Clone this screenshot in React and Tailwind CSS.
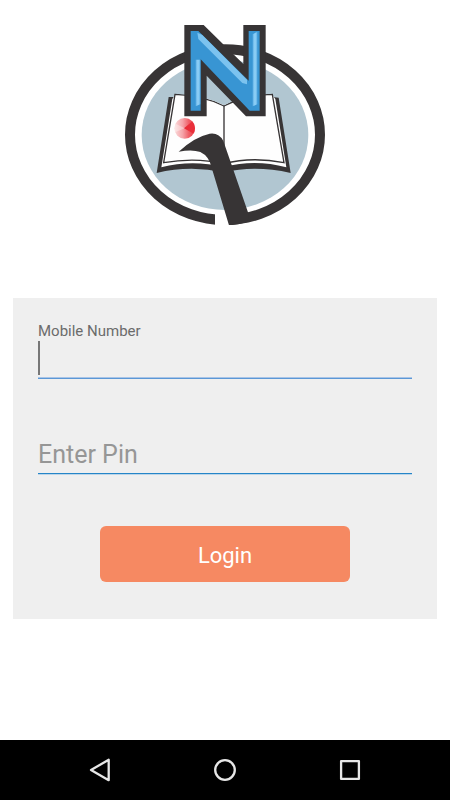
function Logo() {
  return (
    <svg viewBox="30 30 600 600" className="size-[200px]" role="img" aria-label="Logo">
      <defs>
        <linearGradient id="dot" x1="0" y1="0" x2="1" y2="0">
          <stop offset="0" stopColor="#fbdcdc" />
          <stop offset="0.4" stopColor="#f5a3a8" />
          <stop offset="0.7" stopColor="#ef6068" />
          <stop offset="1" stopColor="#ea3a45" />
        </linearGradient>
        <linearGradient id="dotCore" x1="0" y1="0" x2="1" y2="0">
          <stop offset="0" stopColor="#e8242f" />
          <stop offset="1" stopColor="#e8242f" stopOpacity="0.6" />
        </linearGradient>
        <linearGradient id="shine" x1="0" y1="0" x2="1" y2="0">
          <stop offset="0" stopColor="#5fb0e6" />
          <stop offset="0.5" stopColor="#94d3f8" />
          <stop offset="1" stopColor="#5fb0e6" />
        </linearGradient>
      </defs>

      {/* ring */}
      <ellipse cx="330" cy="359" rx="285" ry="256" fill="#fff" stroke="#373435" strokeWidth="30" />
      <ellipse cx="330" cy="360" rx="250" ry="225" fill="#b1c6d1" />
      <path d="M300 592 H345 V631 H300 Z" fill="#fff" />

      {/* book */}
      <path d="M161 246 L180 246 L472 246 L491 248 L527 474 Q420 450 327 472 Q225 450 125 474 Z" fill="#373435" />
      <path d="M172 252 L180 240 L472 240 L481 252 L514 457 Q420 431 327 456 Q230 433 139 457 Z" fill="#fff" />
      <path
        d="M180 238 Q262 240 327 273 Q390 240 472 238 L507 443 Q410 424 327 446 Q240 426 146 443 Z"
        fill="#fefefe"
        stroke="#373435"
        strokeWidth="4"
      />
      <path d="M327 273 V446" stroke="#373435" strokeWidth="4" />
      <path d="M184 236 Q262 238 327 271 Q390 238 470 236 L440 160 H230 Z" fill="#b1c6d1" />
      <circle cx="209" cy="340" r="31" fill="url(#dot)" />
      <path d="M207 340 L232 319 A31 31 0 0 1 236 356 Z" fill="url(#dotCore)" />
      <path d="M209 340 L182 326 A31 31 0 0 0 180 352 Z" fill="#fff" opacity="0.35" />

      {/* pen stroke */}
      <path
        d="M191 410 Q238 366 284 356 Q312 352 325 378 L350 450 L401 598 L398 621 L370 628 L342 631 L290 458 Q283 424 256 411 Q232 402 191 410 Z"
        fill="#373435"
      />

      {/* letter mark */}
      <path
        d="M208 30 H266 L385 147 V30 H452 V304 H393 L275 182 V304 H208 Z"
        fill="#373435"
      />
      <path d="M227 48 H250 L401 197 V48 H434 V287 H404 L257 133 V287 H227 Z" fill="#3895d3" />
      <path d="M242 134 H256 V268 L242 274 Z" fill="url(#shine)" />
      <path d="M413 58 L427 50 V268 L413 274 Z" fill="url(#shine)" />
      <path d="M247 53 L262 60 L396 194 V208 L382 204 L250 72 Z" fill="#7cc3ef" />
    </svg>
  );
}

function NavBar() {
  return (
    <nav className="bg-black">
      <div className="mx-auto grid h-[60px] max-w-[375px] grid-cols-3 text-[#e6e6e6]">
        <button type="button" aria-label="Back" className="flex items-center justify-center">
          <svg viewBox="0 0 24 24" className="size-6" fill="none" stroke="currentColor" strokeWidth="2.3" strokeLinejoin="round">
            <path d="M20.7 1.8 V22.2 L3 12 Z" />
          </svg>
        </button>
        <button type="button" aria-label="Home" className="flex items-center justify-center">
          <svg viewBox="0 0 24 24" className="size-6" fill="none" stroke="currentColor" strokeWidth="2.3">
            <circle cx="12" cy="12" r="9.8" />
          </svg>
        </button>
        <button type="button" aria-label="Recent apps" className="flex items-center justify-center">
          <svg viewBox="0 0 24 24" className="size-6" fill="none" stroke="currentColor" strokeWidth="2.3" strokeLinejoin="round">
            <path d="M3.1 3.1 H20.9 V20.9 H3.1 Z" />
          </svg>
        </button>
      </div>
    </nav>
  );
}

export default function App() {
  return (
    <div className="flex min-h-screen flex-col bg-white font-['Roboto',sans-serif]">
      <main className="flex-1">
        <div className="flex justify-center pt-[25px]">
          <Logo />
        </div>

        <form
          className="mx-[13px] mt-[73px] flex flex-col bg-[#efefef] px-[25px] pt-6 pb-[37px]"
          onSubmit={(e) => e.preventDefault()}
        >
          <label htmlFor="mobile" className="text-[15px] leading-[18px] text-[#6b6b6b]">
            Mobile Number
          </label>
          <div className="flex h-[39px] items-center border-b border-[#5b97d6] shadow-[inset_0_-1px_0_#a9c4e6]">
            <span className="mb-0.5 h-[34px] w-[2px] bg-[#777777]" />
            <input
              id="mobile"
              type="tel"
              className="h-full min-w-0 flex-1 bg-transparent text-[25px] text-[#444444] caret-transparent outline-none"
            />
          </div>

          <input
            type="password"
            placeholder="Enter Pin"
            aria-label="Enter Pin"
            className="mt-14 h-[39px] w-full border-b border-[#2585c8] bg-transparent text-[25px] text-[#444444] shadow-[0_1px_0_#bcd5e8] outline-none placeholder:text-[#969696]"
          />

          <button
            type="submit"
            className="mt-[52px] h-14 w-[250px] self-center rounded-md bg-[#f68962] pt-0.5 text-[22px] text-white"
          >
            Login
          </button>
        </form>
      </main>
      <NavBar />
    </div>
  );
}
